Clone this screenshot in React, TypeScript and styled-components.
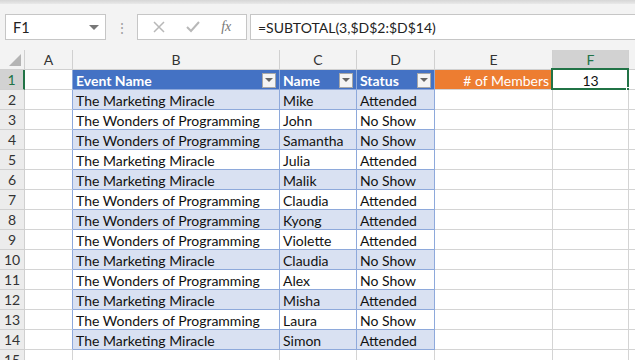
import styled, { createGlobalStyle } from 'styled-components';

const GlobalStyle = createGlobalStyle`
	html, body {
		margin: 0;
		padding: 0;
		background: #ffffff;
	}
	* {
		box-sizing: border-box;
	}
`;

const COLS = [25, 48, 207, 77, 78, 118, 76, 80];
// G only shows a sliver at the right edge, so its letter stays out of view
const LETTERS = ['A', 'B', 'C', 'D', 'E', 'F', ''];

const rows: [string, string, string][] = [
	['The Marketing Miracle', 'Mike', 'Attended'],
	['The Wonders of Programming', 'John', 'No Show'],
	['The Wonders of Programming', 'Samantha', 'No Show'],
	['The Marketing Miracle', 'Julia', 'Attended'],
	['The Marketing Miracle', 'Malik', 'No Show'],
	['The Wonders of Programming', 'Claudia', 'Attended'],
	['The Wonders of Programming', 'Kyong', 'Attended'],
	['The Wonders of Programming', 'Violette', 'Attended'],
	['The Marketing Miracle', 'Claudia', 'No Show'],
	['The Wonders of Programming', 'Alex', 'No Show'],
	['The Marketing Miracle', 'Misha', 'Attended'],
	['The Wonders of Programming', 'Laura', 'No Show'],
	['The Marketing Miracle', 'Simon', 'Attended'],
];

const Window = styled.div`
	width: 635px;
	height: 360px;
	overflow: hidden;
	background: #f3f3f3;
	font-family: Lato, 'Liberation Sans', sans-serif;
	display: flex;
	flex-direction: column;
`;

const RibbonEdge = styled.div`
	height: 4px;
	flex: none;
	background: linear-gradient(#d6d6d6, #e9e9e9);
`;

const FormulaBar = styled.div`
	display: flex;
	align-items: center;
	height: 26px;
	margin: 10px 0 10px 5px;
	flex: none;
`;

const NameBox = styled.div`
	width: 101px;
	height: 26px;
	background: #ffffff;
	border: 1px solid #c6c6c6;
	display: flex;
	align-items: center;
	justify-content: space-between;
	padding: 0 6px 0 7px;
	font-size: 14.5px;
	color: #222;
`;

const DropArrow = styled.span`
	width: 0;
	height: 0;
	border-left: 5px solid transparent;
	border-right: 5px solid transparent;
	border-top: 5px solid #777;
`;

const Grip = styled.div`
	width: 31px;
	display: flex;
	justify-content: center;
	color: #a0a0a0;
	font-size: 14px;
`;

const ButtonsBox = styled.div`
	width: 110px;
	height: 26px;
	background: #ffffff;
	border: 1px solid #c6c6c6;
	display: flex;
	align-items: center;
	justify-content: space-around;
	padding: 0 4px;
	margin-right: 3px;
`;

const FxLabel = styled.span`
	font-family: 'Liberation Serif', serif;
	font-style: italic;
	font-size: 14px;
	color: #777;
`;

const FormulaInput = styled.div`
	flex: 1;
	height: 26px;
	background: #ffffff;
	border: 1px solid #c6c6c6;
	border-right: none;
	display: flex;
	align-items: center;
	padding-left: 7px;
	font-size: 14px;
	color: #222;
`;

const Sheet = styled.div`
	display: grid;
	grid-template-columns: ${COLS.map((c) => c + 'px').join(' ')};
	grid-auto-rows: 20px;
	font-size: 14px;
`;

const ColHead = styled.div<{ $active?: boolean }>`
	display: flex;
	align-items: center;
	justify-content: center;
	font-size: 14px;
	color: ${(p) => (p.$active ? '#217346' : '#333')};
	background: ${(p) => (p.$active ? '#d2d2d2' : '#f3f3f3')};
	border-right: 1px solid #d0d0d0;
	border-bottom: ${(p) => (p.$active ? '2px solid #217346' : '1px solid #d0d0d0')};
`;

const Corner = styled.div`
	background: #f3f3f3;
	border-right: 1px solid #d0d0d0;
	border-bottom: 1px solid #d0d0d0;
	display: flex;
	align-items: flex-end;
	justify-content: flex-end;
	padding: 0 3px 3px 0;
`;

const RowHead = styled.div<{ $active?: boolean }>`
	display: flex;
	align-items: center;
	justify-content: center;
	font-size: 14px;
	color: ${(p) => (p.$active ? '#217346' : '#333')};
	background: ${(p) => (p.$active ? '#d2d2d2' : '#ececec')};
	border-right: ${(p) => (p.$active ? '2px solid #217346' : '1px solid #d0d0d0')};
	border-bottom: 1px solid #d0d0d0;
`;

type Tone = 'plain' | 'head' | 'band' | 'white' | 'orange' | 'picked';

const toneBg: Record<Tone, string> = {
	plain: '#ffffff',
	head: '#4472c4',
	band: '#d9e1f2',
	white: '#ffffff',
	orange: '#ed7d31',
	picked: '#ffffff',
};

const inTable = (t?: Tone) => t === 'head' || t === 'band' || t === 'white';

const Cell = styled.div<{ $tone?: Tone; $edge?: boolean; $align?: string }>`
	position: relative;
	display: flex;
	align-items: center;
	justify-content: ${(p) => p.$align || 'flex-start'};
	padding: 1px 3px 0;
	white-space: nowrap;
	background: ${(p) => toneBg[p.$tone || 'plain']};
	color: ${(p) => (p.$tone === 'head' || p.$tone === 'orange' ? '#ffffff' : '#111')};
	font-weight: ${(p) => (p.$tone === 'head' ? 700 : 400)};
	border-right: 1px solid ${(p) => (p.$edge || inTable(p.$tone) ? '#8ea9db' : '#d4d4d4')};
	border-bottom: 1px solid ${(p) => (inTable(p.$tone) ? '#8ea9db' : '#d4d4d4')};
`;

const FilterButton = styled.span`
	margin-left: auto;
	width: 14px;
	height: 15px;
	background: #f4f4f4;
	border: 1px solid #a8a8a8;
	display: flex;
	align-items: center;
	justify-content: center;
	flex: none;
	&::after {
		content: '';
		border-left: 4px solid transparent;
		border-right: 4px solid transparent;
		border-top: 4px solid #666;
	}
`;

const Selection = styled.span`
	position: absolute;
	left: -2px;
	top: -2px;
	right: -1px;
	bottom: -1px;
	border: 2px solid #217346;
	pointer-events: none;
`;

const FillHandle = styled.span`
	position: absolute;
	right: -4px;
	bottom: -4px;
	width: 6px;
	height: 6px;
	background: #217346;
	border: 1px solid #ffffff;
`;

const App = () => {
	const header = ['Event Name', 'Name', 'Status'];
	return (
		<>
			<GlobalStyle />
			<Window>
				<RibbonEdge />
				<FormulaBar>
					<NameBox>
						<span>F1</span>
						<DropArrow />
					</NameBox>
					<Grip>⋮</Grip>
					<ButtonsBox>
						<svg width="12" height="12" viewBox="0 0 12 12">
							<path d="M1 1 L11 11 M11 1 L1 11" stroke="#b8b8b8" strokeWidth="1.5" />
						</svg>
						<svg width="14" height="12" viewBox="0 0 14 12">
							<path d="M1 6 L5 10 L13 1" stroke="#b8b8b8" strokeWidth="2" fill="none" />
						</svg>
						<FxLabel>fx</FxLabel>
					</ButtonsBox>
					<FormulaInput>=SUBTOTAL(3,$D$2:$D$14)</FormulaInput>
				</FormulaBar>
				<Sheet>
					<Corner>
						<svg width="12" height="12" viewBox="0 0 12 12">
							<path d="M12 0 L12 12 L0 12 Z" fill="#b4b4b4" />
						</svg>
					</Corner>
					{LETTERS.map((l, i) => (
						<ColHead key={i} $active={l === 'F'}>
							{l}
						</ColHead>
					))}

					<RowHead $active>1</RowHead>
					<Cell $edge />
					{header.map((h) => (
						<Cell key={h} $tone="head">
							{h}
							<FilterButton />
						</Cell>
					))}
					<Cell $tone="orange" $align="flex-end">
						# of Members
					</Cell>
					<Cell $tone="picked" $align="center">
						13
						<Selection />
						<FillHandle />
					</Cell>
					<Cell />

					{rows.map((r, i) => {
						const tone: Tone = i % 2 === 0 ? 'band' : 'white';
						return [
							<RowHead key={`h${i}`}>{i + 2}</RowHead>,
							<Cell key={`a${i}`} $edge />,
							...r.map((v, j) => (
								<Cell key={`c${i}-${j}`} $tone={tone}>
									{v}
								</Cell>
							)),
							<Cell key={`e${i}`} />,
							<Cell key={`f${i}`} />,
							<Cell key={`g${i}`} />,
						];
					})}

					<RowHead>15</RowHead>
					{COLS.slice(1).map((_, j) => (
						<Cell key={`l${j}`} />
					))}
				</Sheet>
			</Window>
		</>
	);
};

export default App;
